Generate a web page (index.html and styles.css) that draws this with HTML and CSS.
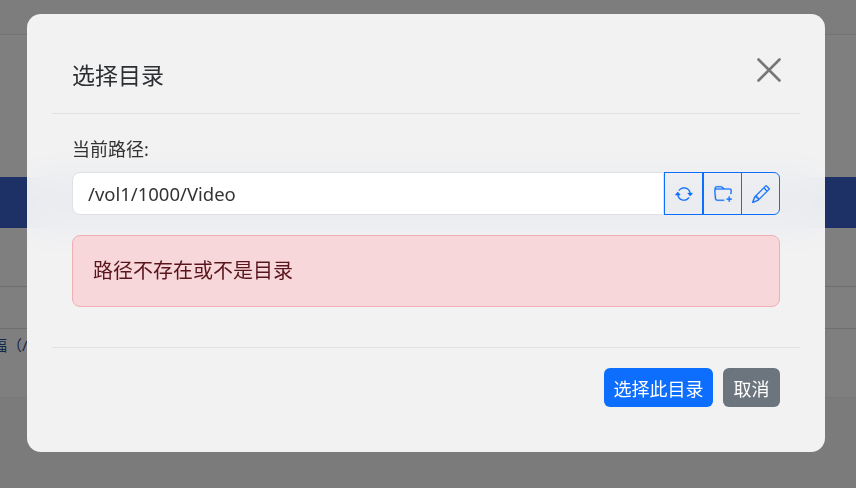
FILE: index.html
```html
<!DOCTYPE html>
<html lang="zh">
<head>
<meta charset="utf-8">
<title>选择目录</title>
<link rel="stylesheet" href="styles.css">
</head>
<body>
<div class="page">
  <div class="topbar"></div>
  <div class="band"></div>
  <div class="row row-a"></div>
  <div class="row row-b"><span class="row-text">幅（/</span></div>
  <div class="row-end"></div>
</div>
<div class="backdrop">
  <div class="modal">
    <header class="modal-header">
      <h5 class="modal-title">选择目录</h5>
      <button class="close" aria-label="关闭">
        <svg viewBox="0 0 24 24" width="24" height="24"><path d="M1.5 1.5 22.5 22.5M22.5 1.5 1.5 22.5" fill="none" stroke="currentColor" stroke-width="2.6" stroke-linecap="round"/></svg>
      </button>
    </header>
    <section class="modal-body">
      <label class="path-label">当前路径:</label>
      <div class="input-group">
        <div class="path-input">/vol1/1000/Video</div>
        <button class="tool">
          <svg class="icon" viewBox="0 0 16 16" width="18" height="18"><path d="M11.534 7h3.932a.25.25 0 0 1 .192.41l-1.966 2.36a.25.25 0 0 1-.384 0l-1.966-2.36a.25.25 0 0 1 .192-.41zm-11 2h3.932a.25.25 0 0 0 .192-.41L2.692 6.23a.25.25 0 0 0-.384 0L.342 8.59A.25.25 0 0 0 .534 9z"/><path fill-rule="evenodd" d="M8 3c-1.552 0-2.94.707-3.857 1.818a.5.5 0 1 1-.771-.636A6.002 6.002 0 0 1 13.917 7H12.9A5.002 5.002 0 0 0 8 3zM3.1 9a5.002 5.002 0 0 0 8.757 2.182.5.5 0 1 1 .771.636A6.002 6.002 0 0 1 2.083 9H3.1z"/></svg>
        </button>
        <button class="tool">
          <svg class="icon" viewBox="0 0 16 16" width="18" height="18"><path d="m.5 3 .04.87a1.99 1.99 0 0 0-.342 1.311l.637 7A2 2 0 0 0 2.826 14H9v-1H2.826a1 1 0 0 1-.995-.91l-.637-7A1 1 0 0 1 2.19 4h11.62a1 1 0 0 1 .996 1.09L14.54 8h1.005l.256-2.819A2 2 0 0 0 13.81 3H9.828a2 2 0 0 1-1.414-.586l-.828-.828A2 2 0 0 0 6.172 1H2.5a2 2 0 0 0-2 2zm5.672-1a1 1 0 0 1 .707.293L7.586 3H2.19c-.24 0-.47.042-.683.12L1.5 2.98a1 1 0 0 1 1-.98h3.672z"/><path d="M13.5 10a.5.5 0 0 1 .5.5V12h1.5a.5.5 0 1 1 0 1H14v1.5a.5.5 0 1 1-1 0V13h-1.5a.5.5 0 0 1 0-1H13v-1.5a.5.5 0 0 1 .5-.5z"/></svg>
        </button>
        <button class="tool">
          <svg class="icon" viewBox="0 0 16 16" width="18" height="18"><path d="M12.146.146a.5.5 0 0 1 .708 0l3 3a.5.5 0 0 1 0 .708l-10 10a.5.5 0 0 1-.168.11l-5 2a.5.5 0 0 1-.65-.65l2-5a.5.5 0 0 1 .11-.168l10-10zM11.207 2.5 13.5 4.793 14.793 3.5 12.5 1.207 11.207 2.5zm1.586 3L10.5 3.207 4 9.707V10h.5a.5.5 0 0 1 .5.5v.5h.5a.5.5 0 0 1 .5.5v.5h.293l6.5-6.5zm-9.761 5.175-.106.106-1.528 3.821 3.821-1.528.106-.106A.5.5 0 0 1 5 12.5V12h-.5a.5.5 0 0 1-.5-.5V11h-.5a.5.5 0 0 1-.468-.325z"/></svg>
        </button>
      </div>
      <div class="alert">路径不存在或不是目录</div>
    </section>
    <footer class="modal-footer">
      <button class="btn btn-primary">选择此目录</button>
      <button class="btn btn-secondary">取消</button>
    </footer>
  </div>
</div>
</body>
</html>
```
FILE: styles.css
```css
* { box-sizing: border-box; }
html, body { margin: 0; height: 100%; }
body {
  overflow: hidden;
  background: #fff;
  font-family: "Noto Sans", "Noto Sans CJK SC", sans-serif;
  color: #212529;
}
button { font: inherit; cursor: pointer; }

.page { height: 488px; display: flex; flex-direction: column; }
.topbar { height: 35px; border-bottom: 1px solid #e6e6e6; margin-bottom: 142px; background: #fbfbfb; }
.band { height: 51px; background: #3c63cc; margin-bottom: 58px; }
.row { border-top: 1px solid #ddd; height: 42px; }
.row-b { height: 69px; padding-top: 6px; font-size: 15px; color: #2f4f8f; line-height: 20px; white-space: nowrap; overflow: hidden; }
.row-text { display: block; margin-left: -8px; }
.row-end { flex: 1; background: #f7f7f7; border-top: 1px solid #eee; }

.backdrop {
  position: fixed;
  inset: 0;
  background: rgba(0, 0, 0, .5);
}
.modal {
  position: absolute;
  left: 27px;
  top: 14px;
  width: 798px;
  height: 438px;
  padding: 25px;
  display: flex;
  flex-direction: column;
  border-radius: 14px;
  background: rgba(255, 255, 255, .9);
  backdrop-filter: blur(20px);
}
.modal-header {
  height: 75px;
  flex: none;
  display: flex;
  align-items: center;
  justify-content: space-between;
  padding: 0 19px 2px 20px;
  border-bottom: 1px solid #dee2e6;
}
.modal-title { margin: 0; font-size: 23px; font-weight: 400; line-height: 30px; color: #2b2f33; }
.close {
  display: flex;
  padding: 0;
  border: 0;
  background: none;
  color: #777;
  margin-top: -10px;
}
.modal-body { flex: 1; padding: 23px 20px 0; }
.path-label { display: block; font-size: 18px; line-height: 24px; height: 24px; margin-bottom: 11px; color: #333; }
.input-group { display: flex; height: 43px; margin-bottom: 20px; }
.path-input {
  flex: 1;
  min-width: 0;
  padding: 0 15px;
  font-size: 18.5px;
  line-height: 42px;
  color: #333;
  background: #fff;
  border: 1px solid #dee2e6;
  border-radius: 8px 0 0 8px;
}
.tool {
  width: 39px;
  display: flex;
  align-items: center;
  justify-content: center;
  padding: 0;
  background: transparent;
  color: #0d6efd;
  border: 1px solid #0d6efd;
}
.tool:last-child { margin-left: -1px; border-radius: 0 6px 6px 0; }
.icon { fill: currentColor; stroke: currentColor; stroke-width: .2; }
.alert {
  height: 72px;
  padding: 0 20px;
  font-size: 20px;
  line-height: 70px;
  color: #58151c;
  background: #f8d7da;
  border: 1px solid #f1aeb5;
  border-radius: 8px;
}
.modal-footer {
  flex: none;
  height: 80px;
  display: flex;
  justify-content: flex-end;
  align-items: flex-start;
  gap: 10px;
  padding: 20px 20px 0;
  border-top: 1px solid #dee2e6;
}
.btn {
  height: 39px;
  padding: 0;
  font-size: 18px;
  color: #fff;
  border: 0;
  border-radius: 6px;
}
.btn-primary { width: 109px; background: #0d6efd; }
.btn-secondary { width: 57px; background: #6c757d; }
```
